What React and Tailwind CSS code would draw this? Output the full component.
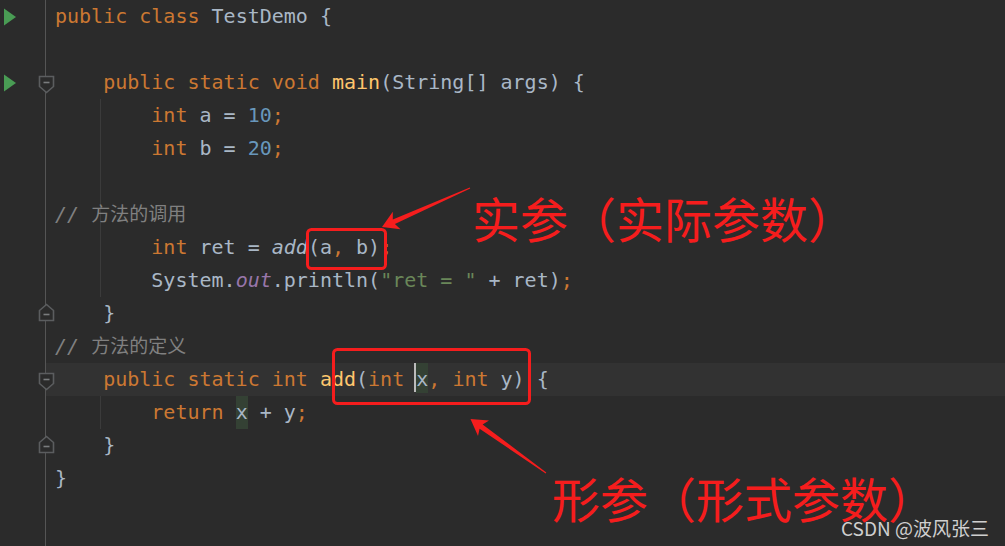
import React from 'react';

const K = 'text-[#cc7832]';
const I = 'text-[#a9b7c6]';
const N = 'text-[#6897bb]';
const Y = 'text-[#ffc66d]';
const S = 'text-[#6a8759]';
const P = 'text-[#9876aa] italic';
const IT = 'text-[#a9b7c6] italic';

// each line: tokens + gutter flags
const lines = [
  { run: true, t: [['public class ', K], ['TestDemo {', I]] },
  { t: [] },
  { run: true, fold: 'down', t: [['    public static void ', K], ['main', Y], ['(String[] args) {', I]] },
  { guide: true, t: [['        int ', K], ['a = ', I], ['10', N], [';', K]] },
  { guide: true, t: [['        int ', K], ['b = ', I], ['20', N], [';', K]] },
  { guide: true, t: [] },
  { guide: true, comment: '方法的调用' },
  { guide: true, t: [['        int ', K], ['ret = ', I], ['add', IT], ['(a', I], [',', K], [' b)', I], [';', K]] },
  { guide: true, t: [['        System.', I], ['out', P], ['.println(', I], ['"ret = "', S], [' + ret)', I], [';', K]] },
  { fold: 'up', t: [['    }', I]] },
  { comment: '方法的定义' },
  { fold: 'down', current: true },
  { guide: true, ret: true },
  { fold: 'up', t: [['    }', I]] },
  { t: [['}', I]] },
  { t: [] },
  { t: [] },
];

function RunIcon() {
  return (
    <svg width="14" height="18" viewBox="0 0 14 18" className="ml-[3px]">
      <path d="M1 0.5 L13 9 L1 17.5 Z" fill="#499c54" />
    </svg>
  );
}

function FoldMarker({ dir }) {
  if (dir === 'down') {
    return (
      <svg width="17" height="19" viewBox="0 0 17 19" className="absolute left-[38px] top-[9px] z-10">
        <path d="M1.5 1.5 H15.5 V11.5 L8.5 17.5 L1.5 11.5 Z" fill="#2b2b2b" stroke="#5b5d5f" strokeWidth="1.6" />
        <path d="M5.5 7.5 H11.5" stroke="#7a7c7e" strokeWidth="1.6" />
      </svg>
    );
  }
  return (
    <svg width="17" height="19" viewBox="0 0 17 19" className="absolute left-[38px] top-[6px] z-10">
      <path d="M1.5 17.5 H15.5 V7.5 L8.5 1.5 L1.5 7.5 Z" fill="#2b2b2b" stroke="#5b5d5f" strokeWidth="1.6" />
      <path d="M5.5 11.5 H11.5" stroke="#7a7c7e" strokeWidth="1.6" />
    </svg>
  );
}

function Arrow({ tip, tail }) {
  const dx = tail[0] - tip[0];
  const dy = tail[1] - tip[1];
  const len = Math.hypot(dx, dy);
  const u = [dx / len, dy / len];
  const n = [-u[1], u[0]];
  const p = (a, b) => `${(tip[0] + u[0] * a + n[0] * b).toFixed(1)},${(tip[1] + u[1] * a + n[1] * b).toFixed(1)}`;
  const pts = [p(0, 0), p(16, 9.5), p(13, 2.6), p(len, 0.6), p(len, -0.6), p(13, -2.6), p(16, -9.5)].join(' ');
  return <polygon points={pts} fill="#f51d1d" />;
}

function CodeLine({ line }) {
  if (line.comment) {
    return (
      <>
        <span className="text-[#808080] italic">//</span>
        <span className="text-[#808080]"> </span>
        <span className="text-[#808080] text-[19px]">{line.comment}</span>
      </>
    );
  }
  if (line.current) {
    return (
      <>
        <span className={K}>{'    public static int '}</span>
        <span className={Y}>add</span>
        <span className={I}>(</span>
        <span className={K}>int </span>
        <span className="relative inline-block align-top h-[30px] bg-[#344134] text-[#a9b7c6]">
          x
          <span className="absolute left-[-2px] top-0 h-[29px] w-[2px] bg-[#bbbbbb]" />
        </span>
        <span className={K}>, int </span>
        <span className={I}>y) {'{'}</span>
      </>
    );
  }
  if (line.ret) {
    return (
      <>
        <span className={K}>{'        return '}</span>
        <span className="inline-block align-top h-[33px] bg-[#344134] text-[#a9b7c6]">x</span>
        <span className={I}> + y</span>
        <span className={K}>;</span>
      </>
    );
  }
  return line.t.map(([txt, cls], i) => (
    <span key={i} className={cls}>{txt}</span>
  ));
}

export default function App() {
  return (
    <div className="relative w-[1005px] h-[546px] overflow-hidden bg-[#2b2b2b]" style={{ fontFamily: '"DejaVu Sans Mono", "Noto Sans CJK SC", monospace' }}>
      <div className="flex flex-col">
        {lines.map((line, i) => (
          <div key={i} className="flex h-[33px]">
            <div className="relative flex items-center w-[46px] border-r border-[#555555]">
              {line.run && <RunIcon />}
              {line.fold && <FoldMarker dir={line.fold} />}
            </div>
            <div className={`relative flex-1 pl-[9px] h-[33px] leading-[33px] text-[20px] whitespace-pre ${line.current ? 'bg-[#323232]' : ''}`}>
              {line.guide && <span className="absolute left-[54px] top-0 h-[33px] w-px bg-[#3b3b3b]" />}
              <span className="relative">
                <CodeLine line={line} />
              </span>
            </div>
          </div>
        ))}
      </div>

      {/* annotations */}
      <svg className="absolute inset-0 z-20" width="1005" height="546" viewBox="0 0 1005 546">
        <rect x="307.5" y="229.5" width="78" height="39" rx="4" fill="none" stroke="#f51d1d" strokeWidth="3" />
        <rect x="333.5" y="349.5" width="196" height="54" rx="4" fill="none" stroke="#f51d1d" strokeWidth="3" />
        <Arrow tip={[382, 227]} tail={[470, 188]} />
        <Arrow tip={[470.5, 419]} tail={[546, 473]} />
      </svg>

      <div className="absolute left-[472px] top-[193px] z-20 text-[48px] leading-none text-[#f51d1d] whitespace-nowrap" style={{ fontFamily: '"Noto Sans CJK SC", sans-serif' }}>
        实参（实际参数）
      </div>
      <div className="absolute left-[552px] top-[473px] z-20 text-[48px] leading-none text-[#f51d1d] whitespace-nowrap" style={{ fontFamily: '"Noto Sans CJK SC", sans-serif' }}>
        形参（形式参数）
      </div>
      <div className="absolute right-[16px] bottom-[9px] z-30 text-[19px] leading-none text-[#cfcfcf] whitespace-nowrap" style={{ fontFamily: '"Noto Sans CJK SC", sans-serif' }}>
        CSDN @波风张三
      </div>
    </div>
  );
}
